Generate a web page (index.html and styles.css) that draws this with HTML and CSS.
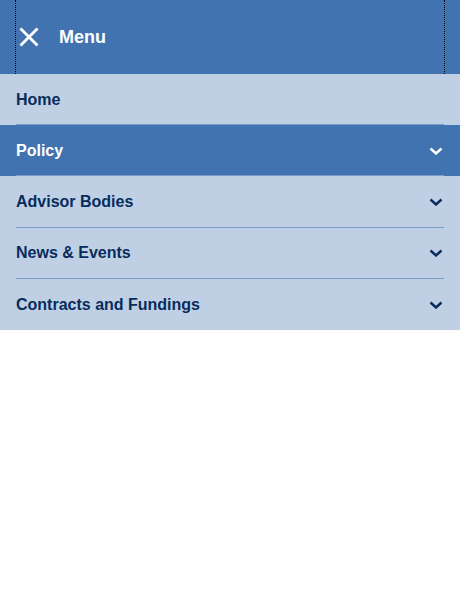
FILE: index.html
```html
<!DOCTYPE html>
<html lang="en">
<head>
<meta charset="utf-8">
<title>Menu</title>
<link rel="stylesheet" href="styles.css">
</head>
<body>
<header class="header">
  <div class="header-inner">
    <button class="close-btn" type="button" aria-label="Close menu">
      <svg class="close-icon" viewBox="0 0 20 20" width="20" height="20" aria-hidden="true">
        <path d="M1.5 1.5 L18.5 18.5 M18.5 1.5 L1.5 18.5" stroke="#fff" stroke-width="2.8" stroke-linecap="butt" fill="none"/>
      </svg>
    </button>
    <span class="menu-title">Menu</span>
  </div>
</header>
<nav class="nav">
  <ul class="nav-list">
    <li class="nav-item"><a class="nav-link" href="#"><span class="nav-row"><span>Home</span></span></a></li>
    <li class="nav-item active"><a class="nav-link" href="#"><span class="nav-row"><span>Policy</span><svg class="chev" viewBox="0 0 14 8" width="14" height="8" aria-hidden="true"><path d="M1.5 1.5 L7 6.5 L12.5 1.5" stroke="currentColor" stroke-width="2.4" fill="none"/></svg></span></a></li>
    <li class="nav-item"><a class="nav-link" href="#"><span class="nav-row"><span>Advisor Bodies</span><svg class="chev" viewBox="0 0 14 8" width="14" height="8" aria-hidden="true"><path d="M1.5 1.5 L7 6.5 L12.5 1.5" stroke="currentColor" stroke-width="2.4" fill="none"/></svg></span></a></li>
    <li class="nav-item"><a class="nav-link" href="#"><span class="nav-row"><span>News &amp; Events</span><svg class="chev" viewBox="0 0 14 8" width="14" height="8" aria-hidden="true"><path d="M1.5 1.5 L7 6.5 L12.5 1.5" stroke="currentColor" stroke-width="2.4" fill="none"/></svg></span></a></li>
    <li class="nav-item last"><a class="nav-link" href="#"><span class="nav-row"><span>Contracts and Fundings</span><svg class="chev" viewBox="0 0 14 8" width="14" height="8" aria-hidden="true"><path d="M1.5 1.5 L7 6.5 L12.5 1.5" stroke="currentColor" stroke-width="2.4" fill="none"/></svg></span></a></li>
  </ul>
</nav>
</body>
</html>
```
FILE: styles.css
```css
* { box-sizing: border-box; }
html, body {
  margin: 0;
  padding: 0;
  background: #fff;
  font-family: "Liberation Sans", Arial, sans-serif;
}
.header {
  background: #4173b0;
  height: 74px;
}
.header-inner {
  margin: 0 15px;
  height: 74px;
  border-left: 1px dotted #000;
  border-right: 1px dotted #000;
  display: flex;
  align-items: center;
}
.close-btn {
  background: none;
  border: 0;
  padding: 0;
  margin: 0 0 0 3px;
  width: 20px;
  height: 20px;
  display: flex;
  cursor: pointer;
}
.close-icon { display: block; }
.menu-title {
  margin-left: 20px;
  color: #fff;
  font-weight: bold;
  font-size: 18px;
  line-height: 20px;
}
.nav {
  background: #bfd0e5;
}
.nav-list {
  list-style: none;
  margin: 0;
  padding: 0;
}
.nav-item {
  background: #bfd0e5;
}
.nav-item.active {
  background: #4173b0;
}
.nav-link {
  display: block;
  padding: 0 16px;
  text-decoration: none;
  color: #082c5c;
  font-weight: bold;
  font-size: 16px;
}
.nav-item.active .nav-link { color: #fff; }
.nav-row {
  display: flex;
  align-items: center;
  justify-content: space-between;
  height: 51.2px;
  padding-top: 1.5px;
  border-bottom: 1px solid #7b9cc9;
  padding-right: 1px;
}
.nav-item.last .nav-row {
  border-bottom-color: #bfd0e5;
}
.chev { display: block; }
```
